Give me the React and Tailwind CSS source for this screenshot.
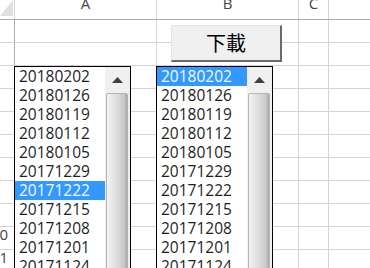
import React from "react";

const COLS = [
  { key: "A", cls: "w-[142px]" },
  { key: "B", cls: "w-[142px]" },
  { key: "C", cls: "w-[30px]" },
];

const DATES = [
  "20180202",
  "20180126",
  "20180119",
  "20180112",
  "20180105",
  "20171229",
  "20171222",
  "20171215",
  "20171208",
  "20171201",
  "20171124",
];

const ListBox = ({ className, selected }) => (
  <div className={`absolute top-[66px] flex h-[210px] w-[117px] border border-black bg-white ${className}`}>
    <div className="w-[90px]">
      {DATES.map((d, i) => (
        <div
          key={d}
          className={`h-[19px] pl-[4px] text-[15.5px] leading-[19px] ${
            i === selected ? "bg-[#3399ff] text-[#f4f9ff]" : "text-[#1e1e1e]"
          }`}
        >
          {d}
        </div>
      ))}
    </div>
    <div className="flex flex-1 flex-col bg-[#f0f0f0]">
      <div className="flex h-[26px] items-center justify-center">
        <svg width="11" height="6" viewBox="0 0 11 6">
          <polygon points="0,6 5.5,0 11,6" fill="#404040" />
        </svg>
      </div>
      <div className="ml-[1px] mr-[2px] flex-1 rounded-t-[2px] border border-[#b4b4b4] bg-[linear-gradient(to_right,#f3f3f3,#dcdcdc_50%,#c9c9c9_85%,#a9a9a9)]" />
    </div>
  </div>
);

export default function App() {
  return (
    <div className="relative h-[268px] w-[370px] overflow-hidden bg-white font-['Open_Sans',sans-serif]">
      {/* column headers */}
      <div className="flex h-[20px] border-b border-[#ababab]">
        <div className="flex w-[15px] items-start border-r border-[#d4d4d4]">
          <svg width="13" height="16" viewBox="0 0 13 16">
            <polygon points="0,16 13,16 13,0" fill="#dfdfdf" />
          </svg>
        </div>
        {COLS.map((c) => (
          <div key={c.key} className={`${c.cls} overflow-hidden border-r border-[#d4d4d4] text-center`}>
            <div className="-mt-[4px] text-[15px] leading-[15px] text-[#444]">{c.key}</div>
          </div>
        ))}
        <div className="flex-1" />
      </div>

      {Array.from({ length: 11 }, (_, r) => (
        <div key={r} className="flex h-[23px] border-b border-[#d4d4d4]">
          <div className="w-[15px] overflow-hidden border-r border-[#ababab]">
            <div className="-ml-[9px] w-[30px] whitespace-nowrap text-[15px] leading-[14px] text-[#444]">{r + 1}</div>
          </div>
          {COLS.map((c) => (
            <div key={c.key} className={`${c.cls} border-r border-[#d4d4d4]`} />
          ))}
          <div className="flex-1" />
        </div>
      ))}

      {/* form controls on the sheet */}
      <button className="absolute left-[171px] top-[25px] flex h-[37px] w-[111px] items-center justify-center border-b-2 border-l border-r-2 border-t border-b-[#6a6a6a] border-l-[#e3e3e3] border-r-[#6a6a6a] border-t-[#e3e3e3] bg-[#f0f0f0] font-['Noto_Sans_CJK_TC',sans-serif] text-[20px] leading-none text-black">
        下載
      </button>

      <ListBox className="left-[14px]" selected={6} />
      <ListBox className="left-[156px]" selected={0} />
    </div>
  );
}
